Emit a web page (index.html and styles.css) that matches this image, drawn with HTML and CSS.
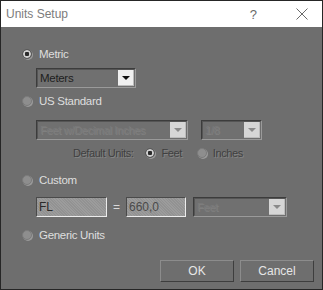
FILE: index.html
```html
<!DOCTYPE html>
<html>
<head>
<meta charset="utf-8">
<link rel="stylesheet" href="styles.css">
</head>
<body>
<div class="window">
  <div class="titlebar">
    <span class="title">Units Setup</span>
    <span class="help">?</span>
    <span class="close">
      <svg width="12" height="12" viewBox="0 0 12 12"><path d="M0.5 0.5 L11.5 11.5 M11.5 0.5 L0.5 11.5" stroke="#6a6a6a" stroke-width="1" fill="none"/></svg>
    </span>
  </div>
  <div class="body">
    <div class="row r-metric">
      <span class="radio checked"></span><span class="label">Metric</span>
    </div>
    <div class="row r-meters">
      <div class="combo meters">
        <span class="ctext">Meters</span>
        <span class="cbtn"><span class="tri"></span></span>
      </div>
    </div>
    <div class="row r-us">
      <span class="radio"></span><span class="label">US Standard</span>
    </div>
    <div class="row r-uscombo">
      <div class="combo disabled us1">
        <span class="ctext dis">Feet w/Decimal Inches</span>
        <span class="cbtn"><span class="tri dim"></span></span>
      </div>
      <div class="combo disabled us2">
        <span class="ctext dis">1/8</span>
        <span class="cbtn"><span class="tri dim"></span></span>
      </div>
    </div>
    <div class="row r-default">
      <span class="dislabel">Default Units:</span>
      <span class="radio checked"></span><span class="dislabel">Feet</span>
      <span class="radio inches-radio"></span><span class="dislabel">Inches</span>
    </div>
    <div class="row r-custom">
      <span class="radio"></span><span class="label">Custom</span>
    </div>
    <div class="row r-fields">
      <div class="field fl">FL</div>
      <span class="eq">=</span>
      <div class="field num">660,0</div>
      <div class="combo disabled cu">
        <span class="ctext dis">Feet</span>
        <span class="cbtn"><span class="tri dim"></span></span>
      </div>
    </div>
    <div class="row r-generic">
      <span class="radio"></span><span class="label">Generic Units</span>
    </div>
    <div class="row r-buttons">
      <button class="btn ok">OK</button>
      <button class="btn cancel">Cancel</button>
    </div>
  </div>
</div>
</body>
</html>
```
FILE: styles.css
```css
html, body {
  margin: 0;
  padding: 0;
  background: #6e6e6e;
}
.window {
  width: 323px;
  height: 290px;
  box-sizing: border-box;
  border: 1px solid #262626;
  display: flex;
  flex-direction: column;
}
.titlebar {
  height: 26px;
  background: #ffffff;
  display: flex;
  align-items: center;
}
.title {
  font-family: "Liberation Sans", Arial, sans-serif;
  font-size: 12px;
  color: #7c7c7c;
  margin-left: 5px;
}
.help {
  font-family: "Liberation Sans", sans-serif;
  font-size: 13px;
  color: #6a6a6a;
  margin-left: auto;
  margin-right: 39px;
}
.close {
  display: flex;
  margin-right: 14px;
}
.body {
  flex: 1;
  background: #6e6e6e;
  padding-top: 20px;
  display: flex;
  flex-direction: column;
  font-family: "Liberation Sans", Arial, sans-serif;
  font-size: 11px;
  color: #e2e2e2;
}
.row {
  display: flex;
  align-items: center;
}
.r-metric, .r-us, .r-custom, .r-generic, .r-default {
  height: 14px;
  padding-left: 21px;
}
.r-meters { margin-top: 7px; padding-left: 35px; }
.r-us { margin-top: 6px; }
.r-uscombo { margin-top: 12px; padding-left: 35px; }
.r-default { margin-top: 6px; padding-left: 72px; }
.r-custom { margin-top: 13px; }
.r-fields { margin-top: 10px; padding-left: 35px; }
.r-generic { margin-top: 11px; }
.r-buttons { margin-top: 18px; padding-left: 159px; }

.radio {
  width: 10px;
  height: 10px;
  border-radius: 50%;
  box-sizing: border-box;
  background: #8e8e8e;
  border: 1px solid #7b7b7b;
  box-shadow: 1px 1px 0 #9a9a9a;
  display: inline-block;
  flex: none;
}
.radio.checked {
  background: radial-gradient(circle, #2a2a2a 0 2px, #d0d0d0 2.5px 3.5px, #8a8a8a 4px);
  border-color: #5a5a5a;
}
.label {
  margin-left: 7px;
  font-size: 11.5px;
  letter-spacing: -0.3px;
  color: #dedede;
}
.combo {
  height: 20px;
  box-sizing: border-box;
  border: 1px solid;
  border-color: #3c3c3c #9a9a9a #9a9a9a #3c3c3c;
  background: #707070;
  display: flex;
  align-items: center;
  padding: 1px;
  position: relative;
}
.combo::before {
  content: "";
  position: absolute;
  inset: 0;
  border: 1px solid;
  border-color: #555 #6e6e6e #6e6e6e #555;
  pointer-events: none;
}
.meters { width: 100px; }
.us1 { width: 152px; }
.us2 { width: 61px; margin-left: 13px; }
.cu { width: 94px; margin-left: 7px; }
.ctext {
  flex: 1;
  padding-left: 2px;
  font-size: 11.5px;
  letter-spacing: -0.3px;
  color: #1e1e1e;
  white-space: nowrap;
  overflow: hidden;
}
.ctext.dis {
  color: #7a7a7a;
  text-shadow: 1px 1px 0 #808080;
  font-size: 11px;
}
.cbtn {
  width: 16px;
  height: 16px;
  background: #f0f0f0;
  border-right: 1px solid #bcbcbc;
  border-bottom: 1px solid #bcbcbc;
  box-sizing: border-box;
  display: flex;
  align-items: center;
  justify-content: center;
  flex: none;
}
.disabled .cbtn { background: #d6d6d6; }
.tri {
  width: 0;
  height: 0;
  border-left: 4px solid transparent;
  border-right: 4px solid transparent;
  border-top: 4px solid #111;
}
.tri.dim { border-top-color: #8a8a8a; }
.dislabel {
  color: #404040;
  text-shadow: 1px 1px 0 #858585;
  font-size: 11px;
  letter-spacing: -0.4px;
}
.r-default .radio { margin-left: 12px; margin-right: 6px; }
.r-default .inches-radio { margin-left: 15px; }
.field {
  height: 20px;
  box-sizing: border-box;
  border: 1px solid;
  border-color: #4a4a4a #ececec #ececec #4a4a4a;
  background: #969696;
  background-image: repeating-linear-gradient(45deg, #9c9c9c 0 1px, #929292 1px 2px);
  font-size: 12px;
  color: #2a2a2a;
  padding-left: 2px;
  display: flex;
  align-items: center;
}
.fl { width: 71px; }
.num { width: 60px; color: #4a4a4a; }
.eq {
  width: 19px;
  text-align: center;
  font-size: 12px;
  color: #d8d8d8;
}
.btn {
  height: 22px;
  box-sizing: border-box;
  background: #6e6e6e;
  border: 1px solid;
  border-color: #8c8c8c #3e3e3e #3e3e3e #8c8c8c;
  font-family: "Liberation Sans", Arial, sans-serif;
  font-size: 12px;
  color: #e6e6e6;
  padding: 0;
}
.ok { width: 74px; }
.cancel { width: 74px; margin-left: 6px; }
```
